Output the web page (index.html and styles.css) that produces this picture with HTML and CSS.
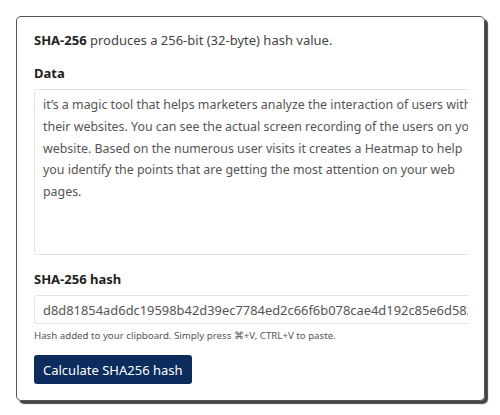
FILE: index.html
```html
<!DOCTYPE html>
<html lang="en">
<head>
    <meta charset="UTF-8">
    <meta name="viewport" content="width=device-width, initial-scale=1.0">
    <title>SHA-256 Hash Generator</title>
    <link rel="stylesheet" href="styles.css">
</head>
<body>
    <div class="hash-card">
        <p class="intro"><strong>SHA-256</strong> produces a 256-bit (32-byte) hash value.</p>

        <label class="field-label" for="data">Data</label>
        <div class="field-clip">
            <textarea id="data" class="data-input">it’s a magic tool that helps marketers analyze the interaction of users with their websites. You can see the actual screen recording of the users on your website. Based on the numerous user visits it creates a Heatmap to help you identify the points that are getting the most attention on your web pages.</textarea>
        </div>

        <label class="field-label" for="hash">SHA-256 hash</label>
        <div class="field-clip">
            <input type="text" id="hash" class="hash-output" value="d8d81854ad6dc19598b42d39ec7784ed2c66f6b078cae4d192c85e6d582a1f0e" readonly>
        </div>
        <p class="hint">Hash added to your clipboard. Simply press ⌘+V, CTRL+V to paste.</p>

        <button type="button" class="calc-btn">Calculate SHA256 hash</button>
    </div>
</body>
</html>
```

FILE: styles.css
```css
body {
    margin: 0;
    padding: 16px;
    background-color: #fff;
    font-family: "Noto Sans", "Open Sans", sans-serif;
    color: #333;
}

.hash-card {
    width: 434px;
    padding: 14px 16px 16px 17px;
    border: 1px solid #555;
    border-radius: 5px;
    box-shadow: 3px 3px 1px #444;
}

.intro {
    margin: 0;
    font-size: 13px;
    line-height: 18px;
    color: #444;
}

.intro strong {
    color: #222;
}

.field-label {
    display: block;
    margin-top: 15px;
    font-size: 13px;
    line-height: 18px;
    font-weight: bold;
    color: #222;
}

/* fields run wider than the card and get cut at its padding */
.field-clip {
    overflow: hidden;
    margin-top: 7px;
}

.data-input {
    display: block;
    box-sizing: border-box;
    width: 460px;
    height: 166px;
    padding: 4px 8px 3px;
    border: 1px solid #e3e3e3;
    border-radius: 3px;
    font-family: inherit;
    font-size: 12.4px;
    line-height: 21.8px;
    color: #555;
    resize: none;
    overflow: hidden;
}

.hash-output {
    display: block;
    box-sizing: border-box;
    width: 470px;
    height: 29px;
    padding: 0 8px;
    border: 1px solid #e3e3e3;
    border-radius: 3px;
    font-family: inherit;
    font-size: 12.9px;
    color: #555;
}

.hint {
    margin: 5px 0 0;
    font-size: 9.7px;
    line-height: 14px;
    color: #555;
}

.calc-btn {
    margin-top: 12px;
    height: 29px;
    padding: 0 9px;
    border: none;
    border-radius: 3px;
    background-color: #0b2c5c;
    color: #fff;
    font-family: inherit;
    font-size: 13px;
    cursor: pointer;
}
```
